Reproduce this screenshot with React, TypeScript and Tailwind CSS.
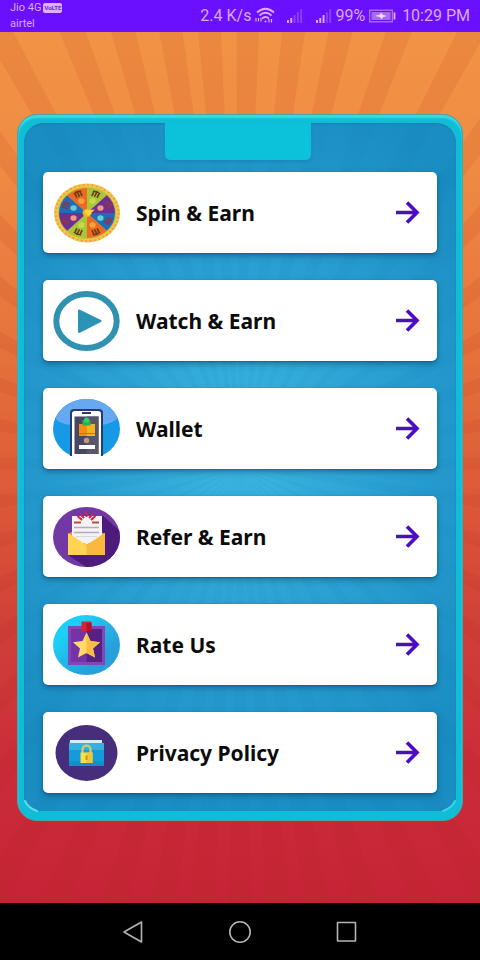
import React from "react";

const RAY_ANGLES = [
  -4, 1, 7, 13, 20, 28, 36, 44, 53, 62, 71, 80, 89, 98, 107, 116, 125, 134, 142, 150, 157, 164, 170, 175, 180,
  185, 190, 196, 203, 210, 218, 226, 235, 244, 253, 262, 271, 280, 289, 298, 307, 315, 323, 331, 339, 345, 351,
];

function rayPoints(angle: number, cx: number, cy: number, half: number) {
  const length = 900;
  const at = (deg: number) => {
    const r = (deg * Math.PI) / 180;
    return `${cx + Math.sin(r) * length},${cy - Math.cos(r) * length}`;
  };
  return `${cx},${cy} ${at(angle - half)} ${at(angle + half)}`;
}

function Rays({ className, height }: { className: string; height: number }) {
  return (
    <svg
      className={`absolute inset-0 h-full w-full ${className}`}
      viewBox={`0 0 480 ${height}`}
      preserveAspectRatio="xMidYMid slice"
      aria-hidden="true"
    >
      {RAY_ANGLES.map((a) => (
        <polygon key={a} points={rayPoints(a, 240, height / 2, 1.5)} fill="currentColor" />
      ))}
    </svg>
  );
}

const iconClass = "h-[60px] w-[67px] shrink-0";

function WheelIcon() {
  const colors = ["#a9c63b", "#6d2f96", "#1f6cb8", "#ee6a23", "#a9c63b", "#6d2f96", "#1f6cb8", "#ee6a23"];
  const pt = (deg: number, r: number) => {
    const a = (deg * Math.PI) / 180;
    return [Math.sin(a) * r, -Math.cos(a) * r];
  };
  const dots = ["#c9d94a", "#f09a78", "#62cfd2", "#f6a13c"];
  return (
    <svg className={iconClass} viewBox="0 0 67 60" aria-hidden="true">
      <g transform="translate(34 30) scale(1.12 1)">
        <circle r="29.5" fill="#f3c548" />
        <circle r="28" fill="none" stroke="#e8954a" strokeWidth="1.600" strokeDasharray="1.4 2.600" />
        <circle r="26" fill="#c3c240" />
        {colors.map((c, i) => {
          const [x1, y1] = pt(i * 45, 25);
          const [x2, y2] = pt(i * 45 + 45, 25);
          const [dx, dy] = pt(i * 45 + 22.5, 13);
          return (
            <g key={i}>
              <path d={`M0 0L${x1} ${y1}A25 25 0 0 1 ${x2} ${y2}Z`} fill={c} />
              <circle cx={dx} cy={dy} r="2.800" fill={dots[i % 4]} />
              <g transform={`rotate(${i * 45 + 22.5}) translate(0 -20)`}>
                <path
                  d="M-3.500-2 0-3 3.500-2M-2.500-1.500v4M0-2.500v5M2.500-1.500v4"
                  stroke={i % 4 === 1 || i % 4 === 2 ? "#8b3650" : "#6b3a12"}
                  strokeWidth="1.500"
                  fill="none"
                />
              </g>
            </g>
          );
        })}
        <circle r="4" fill="#f5b51f" />
        <path d="M-2.500-2.500 7-3.500 1 3Z" fill="#ffd23f" />
      </g>
    </svg>
  );
}

function PlayIcon() {
  return (
    <svg className={iconClass} viewBox="0 0 67 60" aria-hidden="true">
      <ellipse cx="33.5" cy="30" rx="30.2" ry="27" fill="#fff" stroke="#3092b0" strokeWidth="6" />
      <path d="M26 19.5v21.500L47.500 30Z" fill="#2d93b5" stroke="#2d93b5" strokeWidth="2" strokeLinejoin="round" />
    </svg>
  );
}

function WalletIcon() {
  return (
    <svg className={iconClass} viewBox="0 0 67 60" aria-hidden="true">
      <defs>
        <clipPath id="wallet-clip">
          <path d="M0 0H67V57H0Z" />
        </clipPath>
        <clipPath id="wallet-disc">
          <ellipse cx="33.500" cy="30" rx="33.500" ry="30" />
        </clipPath>
      </defs>
      <g clipPath="url(#wallet-clip)">
        <g clipPath="url(#wallet-disc)">
          <path d="M0 0H67V60H0Z" fill="#169ae6" />
          <path d="M0 0H67V16C62 25 48 27 34 27S6 25 3 20Z" fill="#66a9f0" />
        </g>
        <path d="M17 60V14Q17 10 21 10H46Q50 10 50 14V60Z" fill="#293a6b" />
        <path d="M19 60V14.500Q19 12 22 12H45Q48 12 48 14.500V60Z" fill="#fff" />
        <path d="M29 14h9" stroke="#35395c" strokeWidth="2" />
        <path d="M21.500 17.500H45.500V55H21.500Z" fill="#444863" />
        <path d="M33.500 17.500H45.500V55H33.500Z" fill="#5b5568" />
        <path d="M26 25H42V37H26Z" fill="#f78b18" />
        <path d="M34 25H42V37H34Z" fill="#f6b51f" />
        <path d="M26 34.500H42" stroke="#ce7020" strokeWidth="1" />
        <path d="M29.500 26.500V21H37.500V26.500Z" fill="#2daf52" />
        <circle cx="33.500" cy="21" r="2.500" fill="#35d06b" />
        <circle cx="33.500" cy="41.500" r="2.700" fill="#c79779" />
        <path d="M26 46H42V50H26Z" fill="#fff" />
      </g>
    </svg>
  );
}

function ReferIcon() {
  return (
    <svg className={iconClass} viewBox="0 0 67 60" aria-hidden="true">
      <defs>
        <clipPath id="refer-disc">
          <ellipse cx="33.500" cy="30" rx="33.500" ry="30" />
        </clipPath>
      </defs>
      <g clipPath="url(#refer-disc)">
        <path d="M0 0H67V60H0Z" fill="#7238a4" />
        <path d="M49 8 67 24V60H33L15 48 49 47Z" fill="#4d1b7c" />
      </g>
      <path d="M15 27 33 17 52 27V48H15Z" fill="#d99b32" />
      <path d="M19 9H49V36H19Z" fill="#f7f2f5" />
      <path d="M21 15.500H28M39 15.500H46" stroke="#c44a3e" strokeWidth="2" />
      <path d="M27 7 31 11M40 7 36 11M33.500 5V10M24.500 9 29 13M42.500 9 38 13" stroke="#cd2845" strokeWidth="2" fill="none" />
      <path d="M21 20.500H46M21 25.500H46M23 30H44" stroke="#aab0ba" strokeWidth="1.400" />
      <path d="M15 26 33.500 38 52 26V48H15Z" fill="#ffd451" />
      <path d="M33.500 38 52 26V48H33.500Z" fill="#f8b93e" />
      <path d="M22 29.500H46L33.500 37.500Z" fill="#f4f1f3" />
    </svg>
  );
}

function RateIcon() {
  return (
    <svg className={iconClass} viewBox="0 0 67 60" aria-hidden="true">
      <defs>
        <linearGradient id="rate-disc" x1="0" x2="1" y1="0" y2="1">
          <stop offset=".25" stopColor="#1bd0f6" />
          <stop offset=".7" stopColor="#28a0dc" />
        </linearGradient>
      </defs>
      <ellipse cx="33.500" cy="30" rx="33.500" ry="30" fill="url(#rate-disc)" />
      <path d="M15 11H52V50H15Z" fill="#7f48b4" />
      <path d="M18 14H33.500V47H18Z" fill="#7533a7" />
      <path d="M33.500 14H49V47H33.500Z" fill="#562184" />
      <path d="M28.500 6.500H38.500V16H28.500Z" fill="#d32632" />
      <path d="M33.500 8H38.500V16H33.500Z" fill="#a81826" />
      <path d="M33.500 17.500 37.500 26 47 27.200 40 33.500 42 42.500 33.500 38 25 42.500 27 33.500 20 27.200 29.500 26Z" fill="#ffda68" />
      <path d="M33.500 17.500 37.500 26 47 27.200 40 33.500 42 42.500 33.500 38Z" fill="#fabc43" />
    </svg>
  );
}

function PrivacyIcon() {
  return (
    <svg className={iconClass} viewBox="0 0 67 60" aria-hidden="true">
      <ellipse cx="33.500" cy="30" rx="31" ry="28" fill="#472e7c" />
      <path d="M16 18H49L50 22V43H16Z" fill="#1273ae" />
      <path d="M17 17H49V21H17Z" fill="#d7edf4" />
      <path d="M16 20H51V43H16Z" fill="#159bdc" />
      <path d="M16 20H51V27H16Z" fill="#36b1df" />
      <path d="M16 38H51V43H16Z" fill="#168dc9" />
      <path d="M29.500 31V26.500A4 4 0 0 1 37.500 26.500V31" fill="none" stroke="#c3cc72" strokeWidth="2.400" />
      <path d="M27.500 29.500H39.500V40H27.500Z" fill="#f7df48" />
      <path d="M33.500 29.500H39.500V40H33.500Z" fill="#ecc83d" />
      <path d="M33.500 32.500V37" stroke="#d38b24" strokeWidth="2" />
    </svg>
  );
}

function ArrowIcon() {
  return (
    <svg className="ml-auto h-6 w-6 shrink-0" viewBox="0 0 24 24" fill="none" aria-hidden="true">
      <defs>
        <linearGradient id="arrow-fill" gradientUnits="userSpaceOnUse" x1="0" x2="24" y1="0" y2="0">
          <stop offset="0" stopColor="#402090" />
          <stop offset=".6" stopColor="#4b0cc4" />
          <stop offset="1" stopColor="#5706d8" />
        </linearGradient>
      </defs>
      <path d="M0 11.500H21M11 1.500 21 11.500 11 21.500" stroke="url(#arrow-fill)" strokeWidth="3.600" />
    </svg>
  );
}

function Signal({ bars }: { bars: number }) {
  return (
    <svg className="h-4 w-4" viewBox="0 0 16 16" aria-hidden="true">
      {[3, 5, 8, 11, 14].map((h, i) => (
        <rect key={h} x={i * 3.3} y={15 - h} width="1.900" height={h} fill="#dfaef6" opacity={i < bars ? 1 : 0.3} />
      ))}
    </svg>
  );
}

function StatusBar() {
  return (
    <header className="flex h-8 items-center justify-between bg-[#6a10ff] px-[10px] font-[Roboto,sans-serif] text-[#dba9f6]">
      <div className="text-[11px] leading-4">
        <div className="flex items-center gap-[2px]">
          <span>Jio 4G</span>
          <span className="rounded-[2px] bg-[#dfb0f6] px-px text-[6px] leading-[10px] font-bold text-[#6a22d8]">VoLTE</span>
        </div>
        <div>airtel</div>
      </div>
      <div className="flex items-center text-[16px] leading-8">
        <span>2.4 K/s</span>
        <svg className="ml-1 h-5 w-5" viewBox="0 0 20 20" fill="none" stroke="#dfaef6" strokeWidth="1.700" aria-hidden="true">
          <path d="M2 6.500Q10.500-1 19 6.500M4.500 9.500Q10.500 4 16.500 9.500M7 12.500Q10.500 9.500 14 12.500" />
          <circle cx="10.500" cy="15.500" r="1" fill="#dfaef6" stroke="none" />
          <path d="M1 15.500V12M3.500 15.500V12M6 15.500V12M14 13v3.500M16.500 16.500V13" strokeWidth="1.200" />
        </svg>
        <span className="ml-3 flex"><Signal bars={2} /></span>
        <span className="ml-[13px] flex"><Signal bars={3} /></span>
        <span className="ml-[3px]">99%</span>
        <svg className="ml-1 h-[14px] w-[27px]" viewBox="0 0 27 14" fill="none" aria-hidden="true">
          <rect x=".7" y="1.200" width="22.600" height="11.600" stroke="#b57df4" strokeWidth="1.200" />
          <rect x="2.500" y="3" width="19" height="8" fill="#a76af2" />
          <path d="M6 7 11 5.500 12 3.500 14 6 18 7 14 8 12.500 10.500 11 8Z" fill="#f4ddfb" />
          <path d="M25.500 3.500V10.500" stroke="#dfaef6" strokeWidth="1.800" />
        </svg>
        <span className="ml-[6px]">10:29 PM</span>
      </div>
    </header>
  );
}

const MENU = [
  { label: "Spin & Earn", Icon: WheelIcon },
  { label: "Watch & Earn", Icon: PlayIcon },
  { label: "Wallet", Icon: WalletIcon },
  { label: "Refer & Earn", Icon: ReferIcon },
  { label: "Rate Us", Icon: RateIcon },
  { label: "Privacy Policy", Icon: PrivacyIcon },
];

function MenuPanel() {
  return (
    <section className="relative rounded-[20px] border border-[#4aa3a4] bg-[#10bdd6] px-[6px] pt-2 pb-[9px] shadow-[inset_0_3px_2px_#3bdbe5]">
      <div className="relative overflow-hidden rounded-t-[20px] rounded-b-[14px] bg-[radial-gradient(ellipse_70%_55%_at_50%_48%,#3cb7e1_0%,#2a9fd2_50%,#1a8dc3_100%)] px-[19px] pb-[18px] shadow-[inset_0_1px_2px_#1580b0]">
        <Rays className="text-[#0d6fa5]/6" height={690} />
        <div className="relative">
          <div className="ml-[31%] h-[37px] w-[37%] rounded-b-[5px] bg-[#0cc2da] shadow-[0_2px_3px_#137bad80]" />
          <nav className="mt-3 flex flex-col gap-[27px]">
            {MENU.map(({ label, Icon }) => (
              <button
                key={label}
                type="button"
                className="flex h-[81px] w-full items-center rounded-[5px] bg-white pr-[17px] pl-[10px] text-left shadow-[0_3px_6px_#0b4a6a80,0_1px_2px_#0b4a6a80]"
              >
                <Icon />
                <span className="ml-4 font-['Noto_Sans',sans-serif] text-[21px] leading-7 font-bold text-[#0c0c0c]">{label}</span>
                <ArrowIcon />
              </button>
            ))}
          </nav>
        </div>
      </div>
      <svg className="absolute bottom-[5px] left-[5px] h-4 w-4" viewBox="0 0 16 16" fill="none" aria-hidden="true">
        <path d="M2 2Q5 9 14 12" stroke="#5fdcec" strokeWidth="2" strokeLinecap="round" />
      </svg>
      <svg className="absolute right-[5px] bottom-[5px] h-4 w-4" viewBox="0 0 16 16" fill="none" aria-hidden="true">
        <path d="M14 2Q11 9 2 12" stroke="#3fd2e4" strokeWidth="2" strokeLinecap="round" />
      </svg>
    </section>
  );
}

function NavBar() {
  const glyph = "h-7 w-7";
  return (
    <footer className="flex h-[57px] items-center justify-center gap-[79px] bg-black text-[#b4b4b4]">
      <button type="button" aria-label="Back">
        <svg className={glyph} viewBox="0 0 28 28" fill="none" stroke="currentColor" strokeWidth="1.600" strokeLinejoin="round">
          <path d="M5 14 22.500 4V24Z" />
        </svg>
      </button>
      <button type="button" aria-label="Home">
        <svg className={glyph} viewBox="0 0 28 28" fill="none" stroke="currentColor" strokeWidth="1.600">
          <circle cx="14" cy="14" r="10.200" />
        </svg>
      </button>
      <button type="button" aria-label="Recent apps">
        <svg className={glyph} viewBox="0 0 28 28" fill="none" stroke="currentColor" strokeWidth="1.600" strokeLinejoin="round">
          <path d="M4.500 4.500H22.500V23H4.500Z" />
        </svg>
      </button>
    </footer>
  );
}

export default function App() {
  return (
    <div className="flex min-h-screen flex-col">
      <StatusBar />
      <main className="relative flex flex-1 flex-col justify-center overflow-hidden bg-[linear-gradient(#f29344_0%,#f08c45_14%,#e6743c_35%,#dd5c39_52%,#d04039_68%,#ca2c3a_85%,#c62436_100%)] px-[17px]">
        <Rays className="text-[#b02818]/10" height={871} />
        <MenuPanel />
      </main>
      <NavBar />
    </div>
  );
}
